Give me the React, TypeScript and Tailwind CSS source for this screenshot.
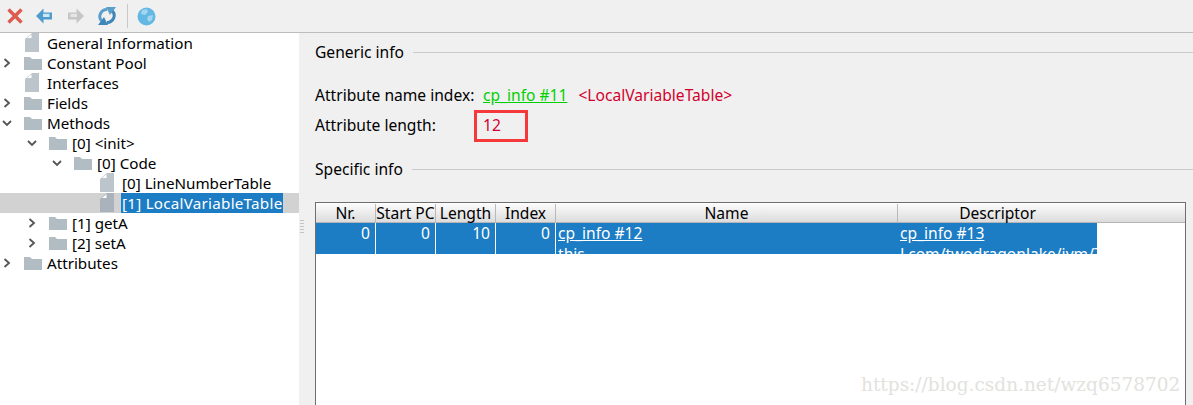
import React from "react";

const FONT = "font-['Noto_Sans','Open_Sans',sans-serif]";

function FileIcon({ dark }: { dark?: boolean }) {
  return (
    <svg width="14" height="20" viewBox="0 0 14 20" className="block">
      <path d="M0 6 L7 0 H14 V19 H0 Z" fill={dark ? "#aab3bb" : "#bcc5cc"} />
      <path d="M2 5 L6.5 1.2 V5 Z" fill="#ffffff" />
    </svg>
  );
}

function FolderIcon() {
  return (
    <svg width="18" height="13" viewBox="0 0 18 13" className="block">
      <path d="M0 0 H6 L8 2 H18 V13 H0 Z" fill="#b2bcc3" />
    </svg>
  );
}

function Chevron({ open }: { open?: boolean }) {
  return (
    <svg width="10" height="10" viewBox="0 0 10 10" className="block">
      {open ? (
        <path d="M1 3 L5 7 L9 3" fill="none" stroke="#555" strokeWidth="1.8" />
      ) : (
        <path d="M2.5 1 L7 5 L2.5 9" fill="none" stroke="#555" strokeWidth="1.8" />
      )}
    </svg>
  );
}

type Row = {
  label: string;
  level: number;
  kind: "file" | "folder";
  arrow?: "open" | "closed";
  selected?: boolean;
};

const rows: Row[] = [
  { label: "General Information", level: 0, kind: "file" },
  { label: "Constant Pool", level: 0, kind: "folder", arrow: "closed" },
  { label: "Interfaces", level: 0, kind: "file" },
  { label: "Fields", level: 0, kind: "folder", arrow: "closed" },
  { label: "Methods", level: 0, kind: "folder", arrow: "open" },
  { label: "[0] <init>", level: 1, kind: "folder", arrow: "open" },
  { label: "[0] Code", level: 2, kind: "folder", arrow: "open" },
  { label: "[0] LineNumberTable", level: 3, kind: "file" },
  { label: "[1] LocalVariableTable", level: 3, kind: "file", selected: true },
  { label: "[1] getA", level: 1, kind: "folder", arrow: "closed" },
  { label: "[2] setA", level: 1, kind: "folder", arrow: "closed" },
  { label: "Attributes", level: 0, kind: "folder", arrow: "closed" },
];

const indent = ["pl-[2px]", "pl-[27px]", "pl-[52px]", "pl-[77px]"];

function TreeRow({ row }: { row: Row }) {
  return (
    <div className={`flex h-5 items-center ${indent[row.level]} ${row.selected ? "bg-[#d2d2d2]" : ""}`}>
      <div className="flex w-[20px] shrink-0 items-center pl-0">
        {row.arrow ? <Chevron open={row.arrow === "open"} /> : null}
      </div>
      <div className="flex w-[25px] shrink-0 items-center pl-[2px]">
        {row.kind === "file" ? (
          <span className="pl-[1px]"><FileIcon dark={row.selected} /></span>
        ) : (
          <FolderIcon />
        )}
      </div>
      <span
        className={`whitespace-nowrap text-[15.2px] leading-5 ${
          row.selected ? "bg-[#1c7cc4] pr-[1px] pl-[1px] -ml-[1px] tracking-[0.25px] text-white" : "text-black"
        }`}
      >
        {row.label}
      </span>
    </div>
  );
}

function Toolbar() {
  return (
    <div className="flex h-[33px] shrink-0 items-center border-b border-[#bdbdbd] bg-[#f0f0f0] pl-[6px]">
      <svg width="18" height="18" viewBox="0 0 18 18">
        <path d="M2.5 2.5 L15.5 15.5 M15.5 2.5 L2.5 15.5" stroke="#dc5d50" strokeWidth="3.4" fill="none" />
      </svg>
      <svg width="18" height="18" viewBox="0 0 18 18" className="ml-[11px]">
        <path d="M1 9 L8.5 1.5 V5.5 H17 V12.5 H8.5 V16.5 Z" fill="#4d9ccb" />
        <path d="M8 6.8 H14.5 V10 H8 Z" fill="#cfe6f4" />
      </svg>
      <svg width="18" height="18" viewBox="0 0 18 18" className="ml-[14px]">
        <path d="M17 9 L9.5 1.5 V5.5 H1 V12.5 H9.5 V16.5 Z" fill="#c6c6c6" />
        <path d="M10 6.8 H3.5 V10 H10 Z" fill="#e6e6e6" />
      </svg>
      <svg width="20" height="20" viewBox="0 0 20 20" className="ml-[12px]">
        <path d="M4.5 15 A7 7 0 0 1 10 3.5" fill="none" stroke="#5a9fca" strokeWidth="3" />
        <path d="M9 1 H19 L13 9 Z" fill="#5a9fca" />
        <path d="M15.5 5 A7 7 0 0 1 10 16.5" fill="none" stroke="#3f87b8" strokeWidth="3" />
        <path d="M11 19 H1 L7 11 Z" fill="#3f87b8" />
      </svg>
      <div className="ml-[10px] h-[24px] w-px bg-[#c8c8c8]" />
      <svg width="19" height="19" viewBox="0 0 19 19" className="ml-[9px]">
        <circle cx="9.5" cy="9.5" r="9" fill="#62b8e2" />
        <path d="M5 3 L10 2 L11 5 L8 8 L4 7 Z M11 9 L16 8 L15 13 L12 15 L10 12 Z" fill="#a2d6ee" />
      </svg>
    </div>
  );
}

function SectionTitle({ title }: { title: string }) {
  return (
    <div className="flex h-5 items-center gap-[9px]">
      <span className="whitespace-nowrap text-[15.6px] leading-5 text-black">{title}</span>
      <div className="h-px flex-1 bg-[#c9c9c9]" />
    </div>
  );
}

const headers: { label: string; w: string }[] = [
  { label: "Nr.", w: "w-[60px]" },
  { label: "Start PC", w: "w-[60px]" },
  { label: "Length", w: "w-[60px]" },
  { label: "Index", w: "w-[60px]" },
  { label: "Name", w: "w-[342px]" },
  { label: "Descriptor", w: "w-[199px]" },
];

function NumCell({ value }: { value: string }) {
  return (
    <div className="w-[60px] shrink-0 border-r border-white pr-[5px] text-right text-[15.6px] leading-[21px] text-white">
      {value}
    </div>
  );
}

function LinkCell({ w, top, bottom }: { w: string; top: string; bottom: string }) {
  return (
    <div className={`${w} shrink-0 overflow-hidden whitespace-nowrap pl-[2px] text-[15.6px] leading-[21px] text-white`}>
      <div className="underline">{top}</div>
      <div>{bottom}</div>
    </div>
  );
}

function Table() {
  return (
    <div className="flex-1 border border-b-0 border-[#6e6e6e] bg-white pt-[1px]">
      <div className="flex h-[19px] border-b border-[#b5b5b5] bg-gradient-to-b from-[#fbfbfb] to-[#dcdcdc]">
        {headers.map((h, i) => (
          <div
            key={h.label}
            className={`${h.w} ${i < 5 ? "border-r border-[#b9b9b9]" : ""} shrink-0 whitespace-nowrap text-center text-[15.6px] leading-[19px] text-black`}
          >
            {h.label}
          </div>
        ))}
      </div>
      <div className="flex h-[31px] w-[781px] overflow-hidden bg-[#1c7cc4]">
        <NumCell value="0" />
        <NumCell value="0" />
        <NumCell value="10" />
        <NumCell value="0" />
        <LinkCell w="w-[342px]" top="cp_info #12" bottom="this" />
        <LinkCell w="w-[199px]" top="cp_info #13" bottom="Lcom/twodragonlake/jvm/Test;" />
      </div>
    </div>
  );
}

export default function App() {
  return (
    <div className={`relative flex h-[405px] w-[1193px] flex-col overflow-hidden bg-[#f0f0f0] ${FONT}`}>
      <Toolbar />
      <div className="flex min-h-0 flex-1">
        <div className="w-[299px] shrink-0 bg-white">
          {rows.map((r) => (
            <TreeRow key={r.label} row={r} />
          ))}
        </div>
        <div className="relative flex min-w-0 flex-1 flex-col pt-[9px] pr-0 pl-[16px]">
          <div className="absolute top-[187px] left-[1px] flex flex-col gap-[2px]">
            {[0, 1, 2, 3, 4].map((i) => (
              <div key={i} className="h-[1px] w-[4px] bg-[#c4c4c4]" />
            ))}
          </div>
          <SectionTitle title="Generic info" />
          <div className="mt-[23px] flex h-5 items-center whitespace-nowrap text-[15.6px] leading-5">
            <span className="w-[168px] shrink-0 text-black">Attribute name index:</span>
            <span className="text-[#00d000] underline">cp_info #11</span>
            <span className="ml-[11px] text-[#d3002d]">&lt;LocalVariableTable&gt;</span>
          </div>
          <div className="mt-[10px] flex h-5 items-center whitespace-nowrap text-[15.6px] leading-5">
            <span className="w-[168px] shrink-0 text-black">Attribute length:</span>
            <span className="text-[#d3002d]">12</span>
          </div>
          <div className="mt-[24px]">
            <SectionTitle title="Specific info" />
          </div>
          <div className="mt-[23px] mr-[7px] flex min-h-0 flex-1 flex-col">
            <Table />
          </div>
          <div className="absolute top-[77px] left-[175px] h-[32px] w-[54px] border-[3px] border-[#f5383a]" />
        </div>
      </div>
      <div className="absolute top-[375px] left-[861px] font-['DejaVu_Serif','Liberation_Serif',serif] text-[18.5px] leading-5 whitespace-nowrap text-[#e2e2de]">
        https://blog.csdn.net/wzq6578702
      </div>
    </div>
  );
}
